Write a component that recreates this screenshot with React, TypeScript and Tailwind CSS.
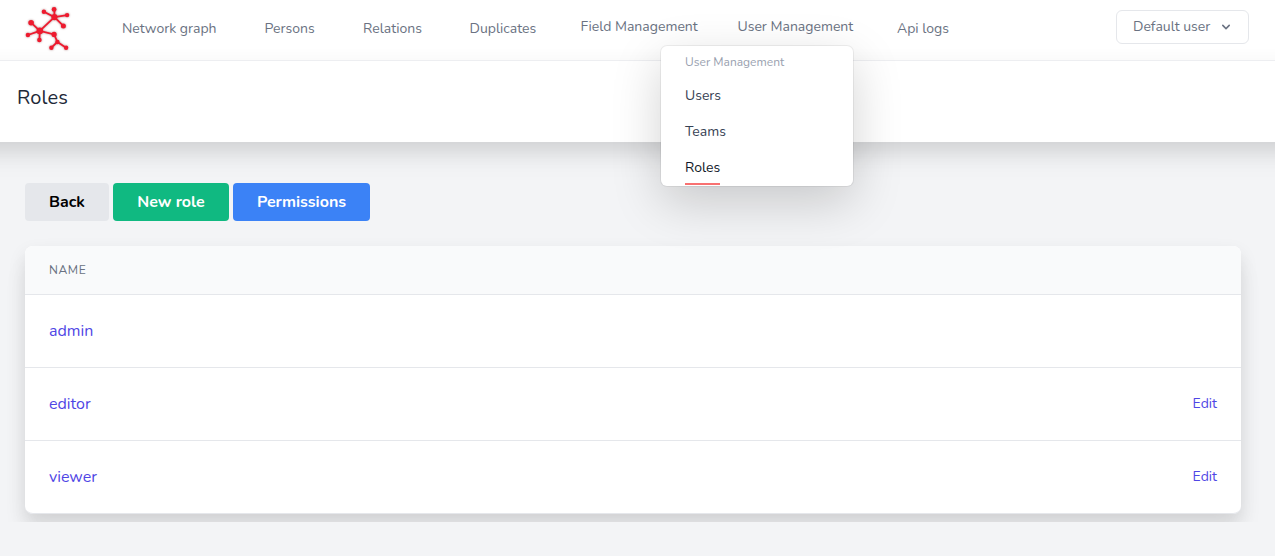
import React from "react";

const roles = [
  { name: "admin", editable: false },
  { name: "editor", editable: true },
  { name: "viewer", editable: true },
];

function Logo() {
  return (
    <svg width="46" height="46" viewBox="-0.400 -0.400 46 46" fill="#ee1a2e" stroke="#ee1a2e" className="drop-shadow-[0_0_1px_rgba(90,0,0,0.45)]">
      <g strokeWidth="1.8" fill="none">
        <path d="M30 11.700 19.500 6.300M30 11.700V4M30 11.700 42.700 9.700M30 11.700 39 20.500M30 11.700 15.400 25.500M15.400 25.500 6.700 17.300M15.400 25.500 3.500 29.600M15.400 25.500 15 34.600M15.400 25.500 29.700 29 33 36.600 27 42.300M33 36.600 41.700 42.300" />
      </g>
      <g stroke="none">
        <circle cx="30" cy="11.700" r="3.100" />
        <circle cx="15.400" cy="25.500" r="3.300" />
        <circle cx="19.500" cy="6.300" r="2.200" />
        <circle cx="29.700" cy="4" r="2.400" />
        <circle cx="42.700" cy="9.700" r="2.200" />
        <circle cx="39" cy="20.500" r="2.500" />
        <circle cx="6.700" cy="17.300" r="2.800" />
        <circle cx="3.500" cy="29.600" r="2.200" />
        <circle cx="15" cy="34.600" r="2.300" />
        <circle cx="29.700" cy="29" r="2.600" />
        <circle cx="33" cy="36.600" r="2.200" />
        <circle cx="27" cy="42.300" r="2.200" />
        <circle cx="41.700" cy="42.300" r="2.200" />
      </g>
    </svg>
  );
}

function UserMenu() {
  return (
    <div className="absolute right-0 top-[29px] flex h-[140px] w-[192px] flex-col items-start rounded-md bg-white px-6 text-sm leading-5 text-gray-700 shadow-[0_0_0_1px_rgba(0,0,0,0.06),0_16px_50px_rgba(0,0,0,0.18)]">
      <span className="mt-2 text-xs leading-4 text-gray-400">User Management</span>
      <a className="mt-4 h-5">Users</a>
      <a className="mt-4 h-5">Teams</a>
      <a className="mt-4 h-[27px] border-b-2 border-[#f87171] text-gray-900">Roles</a>
    </div>
  );
}

export default function App() {
  return (
    <div className="h-[556px] w-full overflow-hidden bg-[#f3f4f6] font-['Nunito','Lato',sans-serif]">
      <nav className="relative z-10 flex h-[61px] items-start border-b border-gray-200/70 bg-[linear-gradient(to_bottom,transparent_48px,rgba(0,0,0,0.016))] pl-6 pr-[26px] text-sm leading-5 text-gray-500">
        <div className="mt-[5px] w-[98px]"><Logo /></div>
        <a className="mt-[19px] w-[142.500px]">Network graph</a>
        <a className="mt-[19px] w-[98.500px]">Persons</a>
        <a className="mt-[19px] w-[106.500px]">Relations</a>
        <a className="mt-[19px] w-[111px]">Duplicates</a>
        <a className="mt-[17px] w-[157px]">Field Management</a>
        <div className="relative mr-11 mt-[17px] w-[115.500px] whitespace-nowrap">
          <a>User Management</a>
          <UserMenu />
        </div>
        <a className="mt-[19px]">Api logs</a>
        <button className="ml-auto mt-[10px] flex h-[34px] w-[133px] items-center justify-between rounded-md border border-gray-200 bg-white pl-4 pr-[14px]">
          Default user
          <svg className="h-4 w-4" viewBox="0 0 20 20" fill="currentColor">
            <path fillRule="evenodd" clipRule="evenodd" d="M5.293 7.293a1 1 0 011.414 0L10 10.586l3.293-3.293a1 1 0 111.414 1.414l-4 4a1 1 0 01-1.414 0l-4-4a1 1 0 010-1.414z" />
          </svg>
        </button>
      </nav>
      <header className="-mt-[61px] h-[142px] bg-white px-[17px] pt-[84px] shadow-[0_-14px_26px_30px_rgba(0,0,0,0.05),0_-22px_20px_30px_rgba(0,0,0,0.1)]">
        <h1 className="text-xl leading-7 tracking-[0.1px] text-gray-800">Roles</h1>
      </header>
      <main className="h-[380px] overflow-hidden pl-[25px] pr-[34px] pt-[41px]">
        <div className="flex gap-1 text-base font-bold leading-[38px] text-white">
          <button className="h-[38px] w-[84px] rounded bg-gray-200 text-black">Back</button>
          <button className="h-[38px] w-[116px] rounded bg-[#10b981]">New role</button>
          <button className="h-[38px] w-[137px] rounded bg-[#3b82f6]">Permissions</button>
        </div>
        <section className="mt-[25px] rounded-lg shadow-[0_20px_26px_rgba(0,0,0,0.05),0_8px_18px_rgba(0,0,0,0.1)]">
          <div className="overflow-hidden rounded-lg border-b border-gray-200 bg-white">
            <div className="flex h-12 items-center bg-[#f9fafb] px-6 text-xs tracking-wider text-gray-500">NAME</div>
            {roles.map((role) => (
              <div key={role.name} className="flex h-[73px] items-center justify-between border-t border-gray-200 px-6 text-[#4f46e5]">
                <a className="text-base">{role.name}</a>
                {role.editable && <a className="text-sm">Edit</a>}
              </div>
            ))}
          </div>
        </section>
      </main>
    </div>
  );
}
